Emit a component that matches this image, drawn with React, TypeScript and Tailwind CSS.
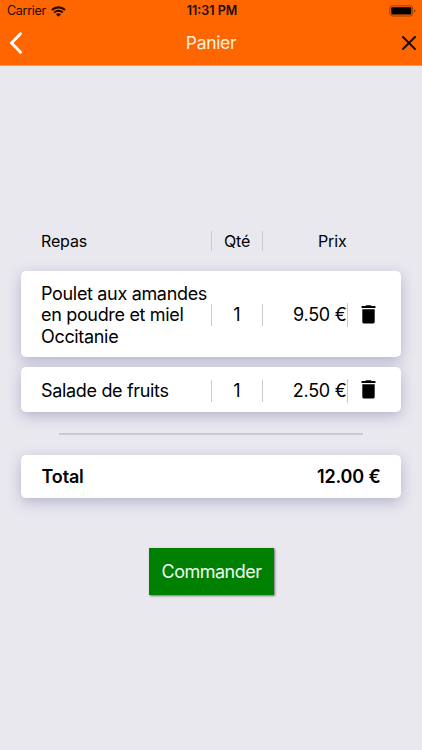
import React from 'react';

interface CartItem {
  id: number;
  lines: string[];
  quantity: number;
  price: number;
}

const items: CartItem[] = [
  { id: 1, lines: ['Poulet aux amandes', 'en poudre et miel', 'Occitanie'], quantity: 1, price: 9.5 },
  { id: 2, lines: ['Salade de fruits'], quantity: 1, price: 2.5 },
];

const formatPrice = (value: number) => `${value.toFixed(2)} €`;

const WifiIcon = () => (
  <svg width="15" height="11" viewBox="0 0 15 11" fill="none" stroke="#1c0b00" strokeWidth="2.1">
    <path d="M0.9 4.1C4.6 0.5 10.4 0.5 14.1 4.1" />
    <path d="M3.2 6.5C5.6 4.2 9.4 4.2 11.8 6.5" />
    <path d="M7.5 10.8L5 8.3C6.4 7 8.6 7 10 8.3Z" fill="#1c0b00" stroke="none" />
  </svg>
);

const BatteryIcon = () => (
  <svg width="28" height="12" viewBox="0 0 28 12">
    <rect x="0.9" y="0.8" width="22.8" height="10.2" rx="2.4" fill="none" stroke="#9a3e00" />
    <rect x="2.3" y="2.2" width="20" height="7.4" rx="1" fill="#000" />
    <path d="M25 4.2C26.9 4.6 26.9 7.2 25 7.6Z" fill="#9a3e00" />
  </svg>
);

const TrashIcon = () => (
  <svg width="15" height="19" viewBox="0 0 15 19" fill="#000">
    <path d="M4.4 0.9L5.2 0.2H9.8L10.6 0.9H13.8Q14.5 0.9 14.5 1.6V2.9H0.5V1.6Q0.5 0.9 1.2 0.9Z" />
    <path d="M1.3 4.2H13.7V16.7Q13.7 18.6 11.8 18.6H3.2Q1.3 18.6 1.3 16.7Z" />
  </svg>
);

const Header = () => (
  <header className="h-[66px] bg-[#ff6600] border-b border-[#ec9a6c]">
    <div className="h-[22px] grid grid-cols-3 items-center pl-[7px] pr-[5px] text-[12.5px] leading-[22px] text-[#1c0b00]">
      <div className="flex items-center gap-[5px]"><span className="tracking-[-0.3px]">Carrier</span><WifiIcon /></div>
      <div className="text-center font-semibold whitespace-nowrap">11:31 PM</div>
      <div className="flex justify-end"><BatteryIcon /></div>
    </div>
    <div className="h-[42px] grid grid-cols-3 items-center pl-[9px] pr-[5px]">
      <button className="justify-self-start" aria-label="Retour">
        <svg width="14" height="22" viewBox="0 0 14 22" fill="none" stroke="#fff" strokeWidth="2.9" strokeLinecap="round" strokeLinejoin="round"><path d="M11.5 1.8L2.5 11L11.5 20.2" /></svg>
      </button>
      <h1 className="pr-[4px] text-center text-[17.5px] leading-[22px] tracking-[-0.35px] text-[#fff0e2]">Panier</h1>
      <button className="justify-self-end" aria-label="Fermer">
        <svg width="16" height="16" viewBox="0 0 16 16" fill="none" stroke="#1c0b00" strokeWidth="2" strokeLinecap="round"><path d="M2 2L14 14M14 2L2 14" /></svg>
      </button>
    </div>
  </header>
);

const CartRow: React.FC<{ item: CartItem }> = ({ item }) => (
  <li className="flex items-center rounded-[5px] bg-white pl-[20px] pt-[11.5px] pb-[9.5px] text-[18px] shadow-[0_4px_14px_rgba(80,80,140,0.34)]">
    <div className="w-[170px] shrink-0 leading-[21.7px] tracking-[-0.33px] whitespace-nowrap">
      {item.lines.map(line => <p key={line}>{line}</p>)}
    </div>
    <div className="w-[52px] h-[22px] shrink-0 border-x border-[#ccccd0] text-center leading-[22px]">{item.quantity}</div>
    <div className="w-[85px] h-[24px] shrink-0 border-r border-[#ccccd0] pr-[0.5px] text-right leading-[24px] tracking-[-0.25px] whitespace-nowrap">{formatPrice(item.price)}</div>
    <button className="ml-[13px] mb-[2px]" aria-label="Supprimer"><TrashIcon /></button>
  </li>
);

export default function App() {
  const total = items.reduce((acc, item) => acc + item.price, 0);

  return (
    <div className="h-[750px] overflow-hidden bg-[#e9e8ef] font-['Inter',sans-serif] text-black">
      <Header />
      <main className="flex flex-col px-[21px] pt-[165px]">
        <div className="flex h-[20px] items-center pl-[20px] text-[16px] leading-[20px] tracking-[-0.15px]">
          <span className="w-[170px]">Repas</span>
          <span className="w-[52px] border-x border-[#ccccd0] text-center">Qté</span>
          <span className="w-[83.5px] text-right">Prix</span>
        </div>

        <ul className="mt-[20px] flex flex-col gap-[10px]">
          {items.map(item => <CartRow key={item.id} item={item} />)}
        </ul>

        <hr className="mx-[38px] mt-[20.5px] border-0 h-[2px] bg-[#c9c9cf]" />

        <div className="mt-[20.5px] flex h-[43px] items-center justify-between rounded-[5px] bg-white pl-[20.5px] pr-[20.5px] text-[18px] font-semibold tracking-[-0.15px] shadow-[0_4px_14px_rgba(80,80,140,0.34)]">
          <span>Total</span>
          <span>{formatPrice(total)}</span>
        </div>

        <button className="ml-[128px] mt-[50px] h-[47px] w-[125px] bg-[#008000] text-[18px] tracking-[-0.5px] text-[#effbef] shadow-[1px_1px_2px_rgba(0,0,0,0.5)]">Commander</button>
      </main>
    </div>
  );
}
